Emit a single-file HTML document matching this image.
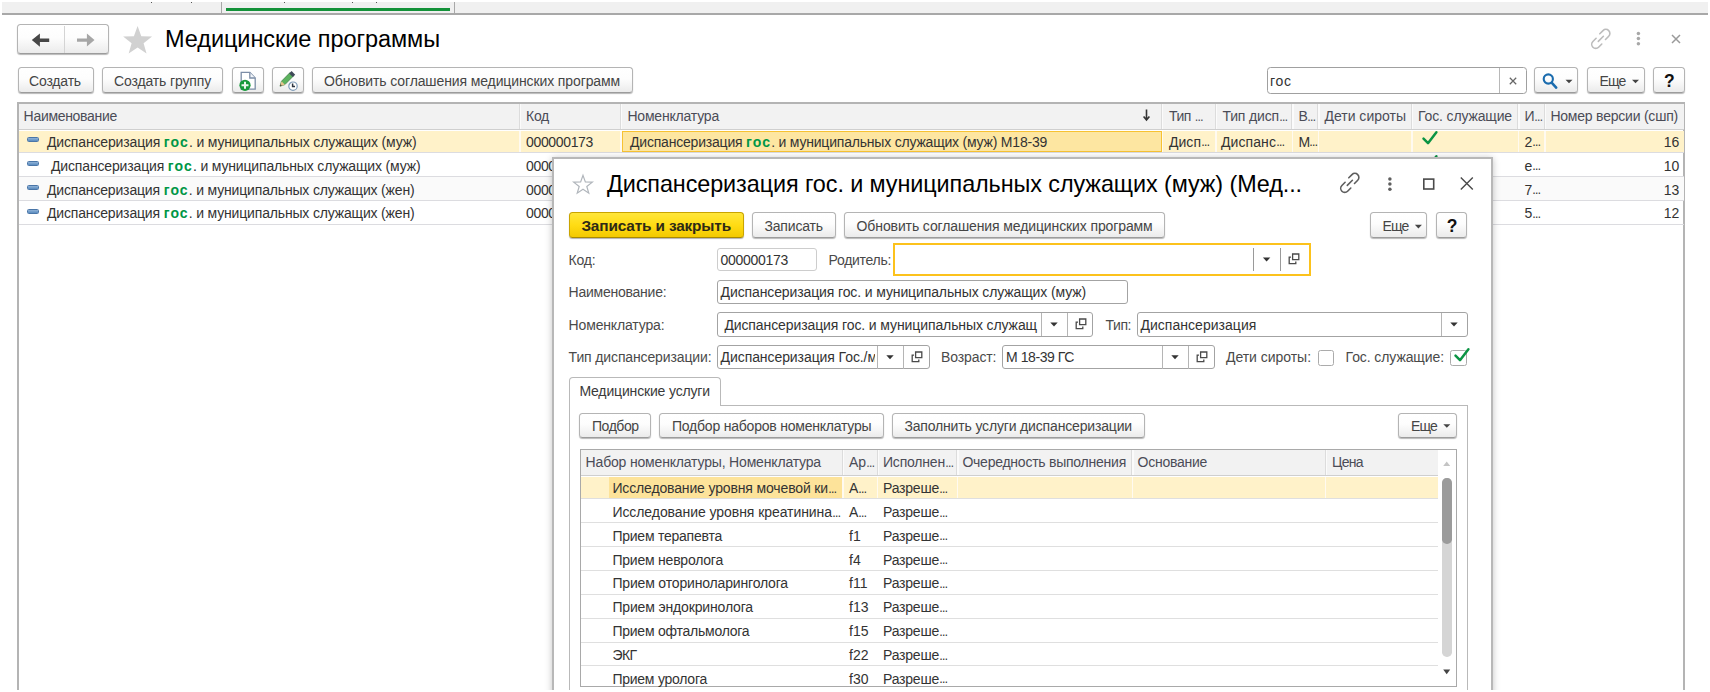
<!DOCTYPE html>
<html lang="ru"><head><meta charset="utf-8"><title>Медицинские программы</title><style>
html,body{margin:0;padding:0;}
body{width:1710px;height:692px;overflow:hidden;background:#fff;position:relative;font-family:"Liberation Sans", Arial, sans-serif;}
#r{position:absolute;left:0;top:0;width:1710px;height:692px;overflow:hidden;background:#fff;}
#r div{position:absolute;box-sizing:border-box;}
#r svg{position:absolute;overflow:visible;}
.t{position:absolute;white-space:pre;}
.btn{border:1px solid #b4b4b4;border-bottom-color:#9c9c9c;border-radius:3.5px;background:linear-gradient(#ffffff 0%,#fdfdfd 45%,#ebebeb 100%);box-shadow:0 1px 1px rgba(0,0,0,.28);}
.inp{border:1px solid #a6a6a6;border-radius:3px;background:#fff;}
b.g{color:#009646;font-weight:bold;letter-spacing:1.1px;}
</style></head><body><div id="r">
<div style="left:2px;top:2px;width:1706px;height:11.5px;background:#f0f0f0;"></div>
<div style="left:2px;top:13px;width:1706px;height:1.5px;background:#a8a8a8;"></div>
<div style="left:221px;top:2px;width:1.2px;height:11.5px;background:#a8a8a8;"></div>
<div style="left:453.5px;top:2px;width:1.2px;height:11.5px;background:#a8a8a8;"></div>
<div style="left:225.7px;top:8.2px;width:224px;height:2.4px;background:#14923a;"></div>
<div style="left:150.5px;top:2px;width:1.2px;height:1.2px;background:#555;"></div>
<div style="left:191px;top:2px;width:1.2px;height:1.2px;background:#555;"></div>
<div style="left:284px;top:2px;width:1.2px;height:1.2px;background:#555;"></div>
<div style="left:351.5px;top:2px;width:1.2px;height:1.2px;background:#555;"></div>
<div style="left:375.6px;top:2px;width:1.2px;height:1.2px;background:#555;"></div>
<div class="btn" style="left:17.4px;top:24.4px;width:92px;height:29.8px;"></div>
<div style="left:64px;top:26px;width:1px;height:27px;background:#d4d4d4;"></div>
<svg style="left:0;top:0" width="200" height="60"><path d="M31.8 40.1L39.9 33.4V38.4H49.2V41.9H39.9V46.7z" fill="#474747"/><path d="M94.5 40.1L86.9 33.6V38.5H77V41.8H86.9V46.6z" fill="#a6a6a6"/></svg>
<svg style="left:0;top:0" width="1710" height="692"><polygon points="137.60,26.10 141.30,36.20 152.06,36.60 143.59,43.25 146.53,53.60 137.60,47.60 128.67,53.60 131.61,43.25 123.14,36.60 133.90,36.20" fill="#d1d1d1" stroke="none" stroke-width="0" stroke-linejoin="miter"/></svg>
<span class="t" style="left:165.00px;top:28.11px;font-size:23.5px;line-height:23.5px;color:#000;letter-spacing:-0.064px;">Медицинские программы</span>
<svg style="left:1591px;top:29.4px" width="20" height="20" viewBox="0 0 20 20"><g fill="none" stroke="#bcbcbc" stroke-width="1.6" stroke-linecap="round"><path d="M8.8 4.8L12 1.6A4 4 0 0 1 17.7 7.3L14.5 10.5"/><path d="M10.8 15.0L7.6 18.2A4 4 0 0 1 1.9 12.5L5.1 9.3"/><path d="M7.3 12.4L12.4 7.3"/></g></svg>
<svg style="left:0;top:0" width="1710" height="692"><circle cx="1638.4" cy="33.5" r="1.75" fill="#a8a8a8"/><circle cx="1638.4" cy="38.6" r="1.75" fill="#a8a8a8"/><circle cx="1638.4" cy="43.7" r="1.75" fill="#a8a8a8"/></svg>
<svg style="left:1671px;top:34px" width="10" height="10" viewBox="0 0 10 10"><path d="M1 1l8 8M9 1l-8 8" stroke="#9a9a9a" stroke-width="1.5" fill="none"/></svg>
<div class="btn" style="left:17.6px;top:67.4px;width:76.4px;height:25.8px;"></div>
<span class="t" style="left:29.00px;top:74.15px;font-size:14px;line-height:14px;color:#454545;letter-spacing:-0.174px;">Создать</span>
<div class="btn" style="left:102px;top:67.4px;width:121.0px;height:25.8px;"></div>
<span class="t" style="left:114.00px;top:74.15px;font-size:14px;line-height:14px;color:#454545;letter-spacing:-0.143px;">Создать группу</span>
<div class="btn" style="left:232px;top:67.4px;width:32.0px;height:25.8px;"></div>
<div class="btn" style="left:272px;top:67.4px;width:32.0px;height:25.8px;"></div>
<div class="btn" style="left:312px;top:67.4px;width:321.0px;height:25.8px;"></div>
<span class="t" style="left:324.00px;top:74.15px;font-size:14px;line-height:14px;color:#454545;letter-spacing:-0.115px;">Обновить соглашения медицинских программ</span>
<svg style="left:238px;top:70px" width="20" height="22" viewBox="0 0 20 22"><path d="M3.2 2.4h8.6l5.4 5.6V19.2H3.2z" fill="#fff" stroke="#7b8da6" stroke-width="1.3"/><path d="M11.8 2.4v5.6h5.4" fill="#f3f6fa" stroke="#7b8da6" stroke-width="1.3"/><circle cx="7" cy="15.3" r="5.6" fill="#16993a"/><path d="M7 11.8v7M3.5 15.3h7" stroke="#e9f7ec" stroke-width="2"/></svg>
<svg style="left:277px;top:70px" width="22" height="22" viewBox="0 0 22 22"><path d="M3 16.2l1.5-5L13 2.6l3.4 3.4-8.5 8.6z" fill="#5cb35e" stroke="#3f7f45" stroke-width=".8"/><path d="M12.2 3.4l2.4-2.3 3.6 3.6-2.4 2.3z" fill="#3f4a59"/><path d="M3 16.2l1.5-5 3.4 3.5z" fill="#e8c48f"/><path d="M3 16.2l.6-2 1.3 1.4z" fill="#333"/><circle cx="16" cy="16.2" r="4.2" fill="#fff" stroke="#7f9bb8" stroke-width="1.2"/><path d="M15.6 13.6v3h2.4" fill="none" stroke="#2c3440" stroke-width="1.5"/></svg>
<div class="inp" style="left:1267px;top:67.4px;width:259.6px;height:26.4px;border-color:#a0a0a0;border-radius:3.5px;"></div>
<div style="left:1499.3px;top:68px;width:1px;height:25px;background:#b8b8b8;"></div>
<span class="t" style="left:1270.00px;top:73.75px;font-size:14px;line-height:14px;color:#333333;letter-spacing:0.669px;">гос</span>
<svg style="left:1508.6px;top:76.8px" width="8" height="8" viewBox="0 0 8 8"><path d="M.8.8l6.4 6.4M7.2.8L.8 7.2" stroke="#666" stroke-width="1.25" fill="none"/></svg>
<div class="btn" style="left:1534.4px;top:67.4px;width:44.0px;height:25.8px;"></div>
<svg style="left:1541px;top:72px" width="18" height="18" viewBox="0 0 18 18"><circle cx="7.3" cy="7" r="4.6" fill="none" stroke="#1b6cae" stroke-width="2.1"/><path d="M10.6 10.6l4.6 5" stroke="#1b6cae" stroke-width="2.6" stroke-linecap="round"/></svg>
<svg style="left:0;top:0" width="1710" height="692"><polygon points="1565.5,79.7 1572.5,79.7 1569.0,83.3" fill="#444"/></svg>
<div class="btn" style="left:1587px;top:67.4px;width:58.0px;height:25.8px;"></div>
<span class="t" style="left:1599.50px;top:74.15px;font-size:14px;line-height:14px;color:#454545;letter-spacing:-0.833px;">Еще</span>
<svg style="left:0;top:0" width="1710" height="692"><polygon points="1632.0,79.7 1639.0,79.7 1635.5,83.3" fill="#444"/></svg>
<div class="btn" style="left:1653px;top:67.4px;width:31.6px;height:25.8px;"></div>
<span class="t" style="left:1664.00px;top:73.19px;font-size:17.5px;line-height:17.5px;color:#111;font-weight:bold;">?</span>
<div style="left:17.2px;top:102.2px;width:1668.0px;height:600px;border:2px solid #b4b4b4;background:#fff;"></div>
<div style="left:19px;top:103.5px;width:1665.2px;height:26px;background:#f2f2f2;"></div>
<div style="left:19px;top:129.3px;width:1665.2px;height:1.2px;background:#cfcfcf;"></div>
<div style="left:519px;top:103.5px;width:1px;height:25.6px;background:#dcdcdc;"></div>
<div style="left:520px;top:103.5px;width:1.2px;height:25.6px;background:#fbfbfb;"></div>
<div style="left:620px;top:103.5px;width:1px;height:25.6px;background:#dcdcdc;"></div>
<div style="left:621px;top:103.5px;width:1.2px;height:25.6px;background:#fbfbfb;"></div>
<div style="left:1161px;top:103.5px;width:1px;height:25.6px;background:#dcdcdc;"></div>
<div style="left:1162px;top:103.5px;width:1.2px;height:25.6px;background:#fbfbfb;"></div>
<div style="left:1215px;top:103.5px;width:1px;height:25.6px;background:#dcdcdc;"></div>
<div style="left:1216px;top:103.5px;width:1.2px;height:25.6px;background:#fbfbfb;"></div>
<div style="left:1291.4px;top:103.5px;width:1px;height:25.6px;background:#dcdcdc;"></div>
<div style="left:1292.4px;top:103.5px;width:1.2px;height:25.6px;background:#fbfbfb;"></div>
<div style="left:1317.4px;top:103.5px;width:1px;height:25.6px;background:#dcdcdc;"></div>
<div style="left:1318.4px;top:103.5px;width:1.2px;height:25.6px;background:#fbfbfb;"></div>
<div style="left:1411px;top:103.5px;width:1px;height:25.6px;background:#dcdcdc;"></div>
<div style="left:1412px;top:103.5px;width:1.2px;height:25.6px;background:#fbfbfb;"></div>
<div style="left:1517.4px;top:103.5px;width:1px;height:25.6px;background:#dcdcdc;"></div>
<div style="left:1518.4px;top:103.5px;width:1.2px;height:25.6px;background:#fbfbfb;"></div>
<div style="left:1544px;top:103.5px;width:1px;height:25.6px;background:#dcdcdc;"></div>
<div style="left:1545px;top:103.5px;width:1.2px;height:25.6px;background:#fbfbfb;"></div>
<div style="left:19px;top:130.6px;width:1665.2px;height:21.6px;background:#fff2c9;"></div>
<div style="left:519.4px;top:130.6px;width:1.4px;height:21.6px;background:#fffaf0;"></div>
<div style="left:620.4px;top:130.6px;width:1.4px;height:21.6px;background:#fffaf0;"></div>
<div style="left:1161.4px;top:130.6px;width:1.4px;height:21.6px;background:#fffaf0;"></div>
<div style="left:1215.4px;top:130.6px;width:1.4px;height:21.6px;background:#fffaf0;"></div>
<div style="left:1291.8000000000002px;top:130.6px;width:1.4px;height:21.6px;background:#fffaf0;"></div>
<div style="left:1317.8000000000002px;top:130.6px;width:1.4px;height:21.6px;background:#fffaf0;"></div>
<div style="left:1411.4px;top:130.6px;width:1.4px;height:21.6px;background:#fffaf0;"></div>
<div style="left:1517.8000000000002px;top:130.6px;width:1.4px;height:21.6px;background:#fffaf0;"></div>
<div style="left:1544.4px;top:130.6px;width:1.4px;height:21.6px;background:#fffaf0;"></div>
<div style="left:19px;top:177.2px;width:1665.2px;height:23px;background:#fafafa;"></div>
<div style="left:19px;top:152px;width:1665.2px;height:1px;background:#dcdce0;"></div>
<div style="left:19px;top:176px;width:1665.2px;height:1px;background:#dcdce0;"></div>
<div style="left:19px;top:200px;width:1665.2px;height:1px;background:#dcdce0;"></div>
<div style="left:19px;top:224px;width:1665.2px;height:1px;background:#dcdce0;"></div>
<div style="left:621.6px;top:131px;width:540px;height:21.4px;background:#fde6a1;border:1.6px solid #f7c232;"></div>
<span class="t" style="left:23.60px;top:108.95px;font-size:14px;line-height:14px;color:#4b4c57;letter-spacing:-0.305px;">Наименование</span>
<span class="t" style="left:526.00px;top:108.95px;font-size:14px;line-height:14px;color:#4b4c57;letter-spacing:-0.271px;">Код</span>
<span class="t" style="left:627.40px;top:108.95px;font-size:14px;line-height:14px;color:#4b4c57;letter-spacing:-0.196px;">Номенклатура</span>
<svg style="left:1142px;top:107px" width="9" height="14" viewBox="0 0 9 14"><path d="M4.5 2.6v10M1.6 9.6l2.9 3.4 2.9-3.4" fill="none" stroke="#333" stroke-width="1.6"/></svg>
<span class="t" style="left:1169.00px;top:108.95px;font-size:14px;line-height:14px;color:#4b4c57;letter-spacing:-0.448px;">Тип</span>
<span class="t" style="left:1195.00px;top:113.69px;font-size:8.4px;line-height:8.4px;color:#4b4c57;font-weight:bold;">…</span>
<span class="t" style="left:1222.40px;top:108.95px;font-size:14px;line-height:14px;color:#4b4c57;letter-spacing:-0.152px;">Тип дисп</span>
<span class="t" style="left:1279.50px;top:113.69px;font-size:8.4px;line-height:8.4px;color:#4b4c57;font-weight:bold;">…</span>
<span class="t" style="left:1298.40px;top:108.95px;font-size:14px;line-height:14px;color:#4b4c57;letter-spacing:-0.744px;">В</span>
<span class="t" style="left:1307.50px;top:113.69px;font-size:8.4px;line-height:8.4px;color:#4b4c57;font-weight:bold;">…</span>
<span class="t" style="left:1324.40px;top:108.95px;font-size:14px;line-height:14px;color:#4b4c57;letter-spacing:0.011px;">Дети сироты</span>
<span class="t" style="left:1418.00px;top:108.95px;font-size:14px;line-height:14px;color:#4b4c57;letter-spacing:-0.139px;">Гос. служащие</span>
<span class="t" style="left:1524.40px;top:108.95px;font-size:14px;line-height:14px;color:#4b4c57;letter-spacing:-0.463px;">И</span>
<span class="t" style="left:1534.50px;top:113.69px;font-size:8.4px;line-height:8.4px;color:#4b4c57;font-weight:bold;">…</span>
<span class="t" style="left:1550.40px;top:108.95px;font-size:14px;line-height:14px;color:#4b4c57;letter-spacing:-0.218px;">Номер версии (сшп)</span>
<span class="t" style="left:47.00px;top:134.75px;font-size:14px;line-height:14px;color:#333333;letter-spacing:-0.156px;">Диспансеризация <b class="g">гос</b>. и муниципальных служащих (муж)</span>
<span class="t" style="left:526.00px;top:134.75px;font-size:14px;line-height:14px;color:#333333;letter-spacing:-0.342px;">000000173</span>
<span class="t" style="left:1663.82px;top:134.75px;font-size:14px;line-height:14px;color:#333333;">16</span>
<span class="t" style="left:1524.40px;top:134.75px;font-size:14px;line-height:14px;color:#333333;">2</span>
<span class="t" style="left:1532.50px;top:139.49px;font-size:8.4px;line-height:8.4px;color:#333333;font-weight:bold;">…</span>
<div style="left:27px;top:137px;width:12.4px;height:5.2px;background:linear-gradient(#8fb2d6,#5b8cc0);border:1px solid #4a76a8;border-radius:1.5px;"></div>
<span class="t" style="left:51.00px;top:158.75px;font-size:14px;line-height:14px;color:#333333;letter-spacing:-0.156px;">Диспансеризация <b class="g">гос</b>. и муниципальных служащих (муж)</span>
<span class="t" style="left:526.00px;top:158.75px;font-size:14px;line-height:14px;color:#333333;letter-spacing:-0.342px;">000000180</span>
<span class="t" style="left:1663.82px;top:158.75px;font-size:14px;line-height:14px;color:#333333;">10</span>
<span class="t" style="left:1524.40px;top:158.75px;font-size:14px;line-height:14px;color:#333333;">е</span>
<span class="t" style="left:1532.50px;top:163.49px;font-size:8.4px;line-height:8.4px;color:#333333;font-weight:bold;">…</span>
<div style="left:27px;top:160.6px;width:12.4px;height:5.2px;background:linear-gradient(#8fb2d6,#5b8cc0);border:1px solid #4a76a8;border-radius:1.5px;"></div>
<span class="t" style="left:47.00px;top:182.55px;font-size:14px;line-height:14px;color:#333333;letter-spacing:-0.167px;">Диспансеризация <b class="g">гос</b>. и муниципальных служащих (жен)</span>
<span class="t" style="left:526.00px;top:182.55px;font-size:14px;line-height:14px;color:#333333;letter-spacing:-0.342px;">000000174</span>
<span class="t" style="left:1663.82px;top:182.55px;font-size:14px;line-height:14px;color:#333333;">13</span>
<span class="t" style="left:1524.40px;top:182.55px;font-size:14px;line-height:14px;color:#333333;">7</span>
<span class="t" style="left:1532.50px;top:187.29px;font-size:8.4px;line-height:8.4px;color:#333333;font-weight:bold;">…</span>
<div style="left:27px;top:184.6px;width:12.4px;height:5.2px;background:linear-gradient(#8fb2d6,#5b8cc0);border:1px solid #4a76a8;border-radius:1.5px;"></div>
<span class="t" style="left:47.00px;top:206.35px;font-size:14px;line-height:14px;color:#333333;letter-spacing:-0.167px;">Диспансеризация <b class="g">гос</b>. и муниципальных служащих (жен)</span>
<span class="t" style="left:526.00px;top:206.35px;font-size:14px;line-height:14px;color:#333333;letter-spacing:-0.342px;">000000181</span>
<span class="t" style="left:1663.82px;top:206.35px;font-size:14px;line-height:14px;color:#333333;">12</span>
<span class="t" style="left:1524.40px;top:206.35px;font-size:14px;line-height:14px;color:#333333;">5</span>
<span class="t" style="left:1532.50px;top:211.09px;font-size:8.4px;line-height:8.4px;color:#333333;font-weight:bold;">…</span>
<div style="left:27px;top:208.6px;width:12.4px;height:5.2px;background:linear-gradient(#8fb2d6,#5b8cc0);border:1px solid #4a76a8;border-radius:1.5px;"></div>
<span class="t" style="left:630.00px;top:134.75px;font-size:14px;line-height:14px;color:#333333;letter-spacing:-0.203px;">Диспансеризация <b class="g">гос</b>. и муниципальных служащих (муж) М18-39</span>
<span class="t" style="left:1169.00px;top:134.75px;font-size:14px;line-height:14px;color:#333333;letter-spacing:0.027px;">Дисп</span>
<span class="t" style="left:1201.50px;top:139.49px;font-size:8.4px;line-height:8.4px;color:#333333;font-weight:bold;">…</span>
<span class="t" style="left:1221.00px;top:134.75px;font-size:14px;line-height:14px;color:#333333;letter-spacing:0.085px;">Диспанс</span>
<span class="t" style="left:1276.50px;top:139.49px;font-size:8.4px;line-height:8.4px;color:#333333;font-weight:bold;">…</span>
<span class="t" style="left:1298.40px;top:134.75px;font-size:14px;line-height:14px;color:#333333;letter-spacing:-1.072px;">М</span>
<span class="t" style="left:1309.50px;top:139.49px;font-size:8.4px;line-height:8.4px;color:#333333;font-weight:bold;">…</span>
<svg style="left:1421.6px;top:130.8px" width="16.0" height="14.0" viewBox="0 0 16 14"><path d="M1.5 7.7L6 12.2L14.4 1.2" fill="none" stroke="#0b9444" stroke-width="2.5" stroke-linecap="round" stroke-linejoin="round"/></svg>
<svg style="left:1421.6px;top:154.6px" width="16.0" height="14.0" viewBox="0 0 16 14"><path d="M1.5 7.7L6 12.2L14.4 1.2" fill="none" stroke="#0b9444" stroke-width="2.5" stroke-linecap="round" stroke-linejoin="round"/></svg>
<div style="left:552.4px;top:157.4px;width:940.8000000000001px;height:560px;background:#fff;border:2px solid #b8b8b8;box-shadow:0 1px 7px rgba(0,0,0,.24);"></div>
<svg style="left:0;top:0" width="1710" height="692"><polygon points="583.00,175.40 585.35,181.96 592.32,182.17 586.80,186.44 588.76,193.13 583.00,189.20 577.24,193.13 579.20,186.44 573.68,182.17 580.65,181.96" fill="#fff" stroke="#b0b5bb" stroke-width="1.2" stroke-linejoin="miter"/></svg>
<span class="t" style="left:607.00px;top:172.59px;font-size:23.4px;line-height:23.4px;color:#000;letter-spacing:-0.088px;">Диспансеризация гос. и муниципальных служащих (муж) (Мед...</span>
<svg style="left:1340px;top:173px" width="20" height="20" viewBox="0 0 20 20"><g fill="none" stroke="#5e5e5e" stroke-width="1.6" stroke-linecap="round"><path d="M8.8 4.8L12 1.6A4 4 0 0 1 17.7 7.3L14.5 10.5"/><path d="M10.8 15.0L7.6 18.2A4 4 0 0 1 1.9 12.5L5.1 9.3"/><path d="M7.3 12.4L12.4 7.3"/></g></svg>
<svg style="left:0;top:0" width="1710" height="692"><circle cx="1389.9" cy="179.0" r="1.75" fill="#5e5e5e"/><circle cx="1389.9" cy="184.1" r="1.75" fill="#5e5e5e"/><circle cx="1389.9" cy="189.2" r="1.75" fill="#5e5e5e"/></svg>
<svg style="left:0;top:0" width="1710" height="692"><rect x="1423.8" y="179.1" width="9.9" height="9.9" fill="none" stroke="#4a4a4a" stroke-width="1.6"/></svg>
<svg style="left:1460px;top:177px" width="14" height="14" viewBox="0 0 14 14"><path d="M.8.6l12 12M12.8.6L.8 12.6" stroke="#4a4a4a" stroke-width="1.4" fill="none"/></svg>
<div style="left:568.6px;top:212.4px;width:175.4px;height:25.8px;border:1px solid #c9a400;border-bottom-color:#a98a00;border-radius:3.5px;background:linear-gradient(#ffe63a 0%,#ffdc14 50%,#f3c900 100%);box-shadow:0 1px 1px rgba(0,0,0,.3);"></div>
<span class="t" style="left:581.40px;top:218.16px;font-size:15.4px;line-height:15.4px;color:#2e2a16;letter-spacing:-0.163px;font-weight:bold;">Записать и закрыть</span>
<div class="btn" style="left:752px;top:212.4px;width:84.4px;height:25.8px;"></div>
<span class="t" style="left:764.40px;top:219.15px;font-size:14px;line-height:14px;color:#454545;letter-spacing:-0.154px;">Записать</span>
<div class="btn" style="left:844.4px;top:212.4px;width:320.6px;height:25.8px;"></div>
<span class="t" style="left:856.60px;top:219.15px;font-size:14px;line-height:14px;color:#454545;letter-spacing:-0.115px;">Обновить соглашения медицинских программ</span>
<div class="btn" style="left:1370px;top:212.4px;width:57.4px;height:25.8px;"></div>
<span class="t" style="left:1382.40px;top:219.15px;font-size:14px;line-height:14px;color:#454545;letter-spacing:-0.833px;">Еще</span>
<svg style="left:0;top:0" width="1710" height="692"><polygon points="1414.9,224.8 1421.9,224.8 1418.4,228.4" fill="#444"/></svg>
<div class="btn" style="left:1436px;top:212.4px;width:31.4px;height:25.8px;"></div>
<span class="t" style="left:1446.80px;top:218.19px;font-size:17.5px;line-height:17.5px;color:#111;font-weight:bold;">?</span>
<span class="t" style="left:568.60px;top:252.55px;font-size:14px;line-height:14px;color:#4a4a4a;letter-spacing:-0.226px;">Код:</span>
<div class="inp" style="left:717.4px;top:247.6px;width:100.0px;height:23.8px;border-color:#cdcdcd;"></div>
<span class="t" style="left:720.60px;top:252.55px;font-size:14px;line-height:14px;color:#333333;letter-spacing:-0.298px;">000000173</span>
<span class="t" style="left:828.60px;top:252.55px;font-size:14px;line-height:14px;color:#4a4a4a;letter-spacing:-0.303px;">Родитель:</span>
<div style="left:893px;top:243.4px;width:417.6px;height:32.4px;border:2.2px solid #fcc21c;background:#fff;"></div>
<div style="left:1253.3px;top:248.4px;width:1px;height:22.400000000000006px;background:#9a9a9a;"></div>
<div style="left:1279.7px;top:248.4px;width:1px;height:22.400000000000006px;background:#9a9a9a;"></div>
<svg style="left:0;top:0" width="1710" height="692"><polygon points="1262.9,257.4 1270.3,257.4 1266.6,261.4" fill="#333"/></svg>
<svg style="left:1287.6px;top:253.2px" width="12" height="12" viewBox="0 0 12 12"><path d="M4.6 1h6.2v5.6H4.6z" fill="none" stroke="#4a4a4a" stroke-width="1.3"/><path d="M3 4.2H1.2v6.4h6.6V8.4" fill="none" stroke="#4a4a4a" stroke-width="1.3"/></svg>
<span class="t" style="left:568.60px;top:285.15px;font-size:14px;line-height:14px;color:#4a4a4a;letter-spacing:-0.243px;">Наименование:</span>
<div class="inp" style="left:717.4px;top:280px;width:410.2px;height:24.2px;border-color:#a3a3a3;"></div>
<span class="t" style="left:720.60px;top:285.15px;font-size:14px;line-height:14px;color:#333333;letter-spacing:-0.118px;">Диспансеризация гос. и муниципальных служащих (муж)</span>
<span class="t" style="left:568.60px;top:317.55px;font-size:14px;line-height:14px;color:#4a4a4a;letter-spacing:-0.157px;">Номенклатура:</span>
<div class="inp" style="left:717.4px;top:312.4px;width:376.0px;height:24.6px;border-color:#a3a3a3;"></div>
<div style="left:1041.1px;top:313px;width:1px;height:23.399999999999977px;background:#b5b5b5;"></div>
<div style="left:1067.1px;top:313px;width:1px;height:23.399999999999977px;background:#b5b5b5;"></div>
<span class="t" style="left:720.60px;top:317.55px;font-size:14px;line-height:14px;color:#333333;letter-spacing:-0.104px;"> Диспансеризация гос. и муниципальных служащ</span>
<svg style="left:0;top:0" width="1710" height="692"><polygon points="1050.3,322.6 1057.7,322.6 1054.0,326.6" fill="#333"/></svg>
<svg style="left:1074.6px;top:318.4px" width="12" height="12" viewBox="0 0 12 12"><path d="M4.6 1h6.2v5.6H4.6z" fill="none" stroke="#4a4a4a" stroke-width="1.3"/><path d="M3 4.2H1.2v6.4h6.6V8.4" fill="none" stroke="#4a4a4a" stroke-width="1.3"/></svg>
<span class="t" style="left:1105.60px;top:317.55px;font-size:14px;line-height:14px;color:#4a4a4a;letter-spacing:-0.459px;">Тип:</span>
<div class="inp" style="left:1137px;top:312.4px;width:330.6px;height:24.6px;border-color:#a3a3a3;"></div>
<div style="left:1441.1px;top:313px;width:1px;height:23.399999999999977px;background:#b5b5b5;"></div>
<span class="t" style="left:1140.40px;top:317.55px;font-size:14px;line-height:14px;color:#333333;letter-spacing:0.039px;">Диспансеризация</span>
<svg style="left:0;top:0" width="1710" height="692"><polygon points="1450.3,322.6 1457.7,322.6 1454.0,326.6" fill="#333"/></svg>
<span class="t" style="left:568.60px;top:350.15px;font-size:14px;line-height:14px;color:#4a4a4a;letter-spacing:-0.133px;">Тип диспансеризации:</span>
<div class="inp" style="left:717.4px;top:345px;width:212.6px;height:24.4px;border-color:#a3a3a3;"></div>
<div style="left:877.1px;top:345.6px;width:1px;height:23.19999999999999px;background:#b5b5b5;"></div>
<div style="left:903.1px;top:345.6px;width:1px;height:23.19999999999999px;background:#b5b5b5;"></div>
<div style="left:719px;top:347px;width:156.4px;height:21px;overflow:hidden;"><span class="t" style="left:1.6px;top:3.15px;font-size:14px;line-height:14px;color:#333;letter-spacing:-0.08px;">Диспансеризация Гос./муниципальных</span></div>
<svg style="left:0;top:0" width="1710" height="692"><polygon points="886.3,355.2 893.7,355.2 890.0,359.2" fill="#333"/></svg>
<svg style="left:910.6px;top:351.0px" width="12" height="12" viewBox="0 0 12 12"><path d="M4.6 1h6.2v5.6H4.6z" fill="none" stroke="#4a4a4a" stroke-width="1.3"/><path d="M3 4.2H1.2v6.4h6.6V8.4" fill="none" stroke="#4a4a4a" stroke-width="1.3"/></svg>
<span class="t" style="left:941.00px;top:350.15px;font-size:14px;line-height:14px;color:#4a4a4a;letter-spacing:-0.108px;">Возраст:</span>
<div class="inp" style="left:1002.4px;top:345px;width:212.6px;height:24.4px;border-color:#a3a3a3;"></div>
<div style="left:1161.9px;top:345.6px;width:1px;height:23.19999999999999px;background:#b5b5b5;"></div>
<div style="left:1188.1px;top:345.6px;width:1px;height:23.19999999999999px;background:#b5b5b5;"></div>
<span class="t" style="left:1006.00px;top:350.15px;font-size:14px;line-height:14px;color:#333333;letter-spacing:-0.431px;">М 18-39 ГС</span>
<svg style="left:0;top:0" width="1710" height="692"><polygon points="1171.3,355.2 1178.7,355.2 1175.0,359.2" fill="#333"/></svg>
<svg style="left:1195.6px;top:351.0px" width="12" height="12" viewBox="0 0 12 12"><path d="M4.6 1h6.2v5.6H4.6z" fill="none" stroke="#4a4a4a" stroke-width="1.3"/><path d="M3 4.2H1.2v6.4h6.6V8.4" fill="none" stroke="#4a4a4a" stroke-width="1.3"/></svg>
<span class="t" style="left:1226.00px;top:350.15px;font-size:14px;line-height:14px;color:#4a4a4a;letter-spacing:-0.031px;">Дети сироты:</span>
<div style="left:1318px;top:349.6px;width:16.2px;height:16.2px;border:1px solid #ababab;border-radius:2.5px;background:#fff;"></div>
<span class="t" style="left:1345.60px;top:350.15px;font-size:14px;line-height:14px;color:#4a4a4a;letter-spacing:-0.093px;">Гос. служащие:</span>
<div style="left:1450.4px;top:349.6px;width:16.6px;height:16.2px;border:1px solid #ababab;border-radius:2.5px;background:#fff;"></div>
<svg style="left:1453.6px;top:348.4px" width="16.0" height="14.0" viewBox="0 0 16 14"><path d="M1.5 7.7L6 12.2L14.4 1.2" fill="none" stroke="#0b9444" stroke-width="2.5" stroke-linecap="round" stroke-linejoin="round"/></svg>
<div style="left:568.6px;top:404.6px;width:899.1999999999999px;height:320px;border:1.2px solid #b9b9b9;background:#fff;"></div>
<div style="left:568.6px;top:377.4px;width:152.8px;height:28.6px;border:1.2px solid #b9b9b9;border-bottom:none;border-radius:4px 4px 0 0;background:#fff;"></div>
<span class="t" style="left:579.40px;top:383.75px;font-size:14px;line-height:14px;color:#3a3a3a;letter-spacing:-0.157px;">Медицинские услуги</span>
<div class="btn" style="left:579.4px;top:412.6px;width:72.0px;height:25.8px;"></div>
<span class="t" style="left:592.00px;top:418.55px;font-size:14px;line-height:14px;color:#454545;letter-spacing:-0.452px;">Подбор</span>
<div class="btn" style="left:659.4px;top:412.6px;width:224.6px;height:25.8px;"></div>
<span class="t" style="left:672.00px;top:418.55px;font-size:14px;line-height:14px;color:#454545;letter-spacing:-0.217px;">Подбор наборов номенклатуры</span>
<div class="btn" style="left:892px;top:412.6px;width:253.4px;height:25.8px;"></div>
<span class="t" style="left:904.40px;top:418.55px;font-size:14px;line-height:14px;color:#454545;letter-spacing:-0.162px;">Заполнить услуги диспансеризации</span>
<div class="btn" style="left:1398.4px;top:412.6px;width:58.2px;height:25.8px;"></div>
<span class="t" style="left:1411.00px;top:418.55px;font-size:14px;line-height:14px;color:#454545;letter-spacing:-0.833px;">Еще</span>
<svg style="left:0;top:0" width="1710" height="692"><polygon points="1443.3,424.2 1450.3,424.2 1446.8,427.8" fill="#444"/></svg>
<div style="left:579.6px;top:448.6px;width:877.4px;height:238.39999999999998px;border:1.4px solid #a9a9a9;background:#fff;"></div>
<div style="left:581px;top:450px;width:856.5999999999999px;height:25px;background:#f2f2f2;"></div>
<div style="left:581px;top:475px;width:856.5999999999999px;height:1.2px;background:#cfcfcf;"></div>
<div style="left:842px;top:450px;width:1px;height:25px;background:#dcdcdc;"></div>
<div style="left:843px;top:450px;width:1.2px;height:25px;background:#fbfbfb;"></div>
<div style="left:876.6px;top:450px;width:1px;height:25px;background:#dcdcdc;"></div>
<div style="left:877.6px;top:450px;width:1.2px;height:25px;background:#fbfbfb;"></div>
<div style="left:956.4px;top:450px;width:1px;height:25px;background:#dcdcdc;"></div>
<div style="left:957.4px;top:450px;width:1.2px;height:25px;background:#fbfbfb;"></div>
<div style="left:1131.4px;top:450px;width:1px;height:25px;background:#dcdcdc;"></div>
<div style="left:1132.4px;top:450px;width:1.2px;height:25px;background:#fbfbfb;"></div>
<div style="left:1324.6px;top:450px;width:1px;height:25px;background:#dcdcdc;"></div>
<div style="left:1325.6px;top:450px;width:1.2px;height:25px;background:#fbfbfb;"></div>
<div style="left:581px;top:477.4px;width:856.5999999999999px;height:20.4px;background:#fff2c9;"></div>
<div style="left:842.4px;top:477.4px;width:1.4px;height:20.4px;background:#fffaf0;"></div>
<div style="left:877.0px;top:477.4px;width:1.4px;height:20.4px;background:#fffaf0;"></div>
<div style="left:956.8px;top:477.4px;width:1.4px;height:20.4px;background:#fffaf0;"></div>
<div style="left:1131.8000000000002px;top:477.4px;width:1.4px;height:20.4px;background:#fffaf0;"></div>
<div style="left:1325.0px;top:477.4px;width:1.4px;height:20.4px;background:#fffaf0;"></div>
<div style="left:609.4px;top:477.4px;width:233px;height:20.4px;background:#fde39a;"></div>
<div style="left:581px;top:498px;width:856.5999999999999px;height:1px;background:#dfdfdf;"></div>
<div style="left:581px;top:522px;width:856.5999999999999px;height:1px;background:#dfdfdf;"></div>
<div style="left:581px;top:546px;width:856.5999999999999px;height:1px;background:#dfdfdf;"></div>
<div style="left:581px;top:570px;width:856.5999999999999px;height:1px;background:#dfdfdf;"></div>
<div style="left:581px;top:594px;width:856.5999999999999px;height:1px;background:#dfdfdf;"></div>
<div style="left:581px;top:618px;width:856.5999999999999px;height:1px;background:#dfdfdf;"></div>
<div style="left:581px;top:642px;width:856.5999999999999px;height:1px;background:#dfdfdf;"></div>
<div style="left:581px;top:665px;width:856.5999999999999px;height:1px;background:#dfdfdf;"></div>
<span class="t" style="left:585.60px;top:455.15px;font-size:14px;line-height:14px;color:#4b4c57;letter-spacing:-0.174px;">Набор номенклатуры, Номенклатура</span>
<span class="t" style="left:849.00px;top:455.15px;font-size:14px;line-height:14px;color:#4b4c57;letter-spacing:-0.062px;">Ар</span>
<span class="t" style="left:866.50px;top:459.89px;font-size:8.4px;line-height:8.4px;color:#4b4c57;font-weight:bold;">…</span>
<span class="t" style="left:883.00px;top:455.15px;font-size:14px;line-height:14px;color:#4b4c57;letter-spacing:-0.193px;">Исполнен</span>
<span class="t" style="left:945.50px;top:459.89px;font-size:8.4px;line-height:8.4px;color:#4b4c57;font-weight:bold;">…</span>
<span class="t" style="left:962.40px;top:455.15px;font-size:14px;line-height:14px;color:#4b4c57;letter-spacing:-0.241px;">Очередность выполнения</span>
<span class="t" style="left:1137.60px;top:455.15px;font-size:14px;line-height:14px;color:#4b4c57;letter-spacing:-0.268px;">Основание</span>
<span class="t" style="left:1332.00px;top:455.15px;font-size:14px;line-height:14px;color:#4b4c57;letter-spacing:-0.668px;">Цена</span>
<span class="t" style="left:612.40px;top:480.95px;font-size:14px;line-height:14px;color:#333333;letter-spacing:-0.144px;">Исследование уровня мочевой ки</span>
<span class="t" style="left:828.50px;top:485.69px;font-size:8.4px;line-height:8.4px;color:#333333;font-weight:bold;">…</span>
<span class="t" style="left:849.00px;top:480.95px;font-size:14px;line-height:14px;color:#333333;">А</span>
<span class="t" style="left:858.50px;top:485.69px;font-size:8.4px;line-height:8.4px;color:#333333;font-weight:bold;">…</span>
<span class="t" style="left:883.00px;top:480.95px;font-size:14px;line-height:14px;color:#333333;letter-spacing:-0.217px;">Разреше</span>
<span class="t" style="left:939.50px;top:485.69px;font-size:8.4px;line-height:8.4px;color:#333333;font-weight:bold;">…</span>
<span class="t" style="left:612.40px;top:504.80px;font-size:14px;line-height:14px;color:#333333;letter-spacing:-0.063px;">Исследование уровня креатинина</span>
<span class="t" style="left:832.50px;top:509.54px;font-size:8.4px;line-height:8.4px;color:#333333;font-weight:bold;">…</span>
<span class="t" style="left:849.00px;top:504.80px;font-size:14px;line-height:14px;color:#333333;">А</span>
<span class="t" style="left:858.50px;top:509.54px;font-size:8.4px;line-height:8.4px;color:#333333;font-weight:bold;">…</span>
<span class="t" style="left:883.00px;top:504.80px;font-size:14px;line-height:14px;color:#333333;letter-spacing:-0.217px;">Разреше</span>
<span class="t" style="left:939.50px;top:509.54px;font-size:8.4px;line-height:8.4px;color:#333333;font-weight:bold;">…</span>
<span class="t" style="left:612.40px;top:528.65px;font-size:14px;line-height:14px;color:#333333;letter-spacing:-0.235px;">Прием терапевта</span>
<span class="t" style="left:849.00px;top:528.65px;font-size:14px;line-height:14px;color:#333333;">f1</span>
<span class="t" style="left:883.00px;top:528.65px;font-size:14px;line-height:14px;color:#333333;letter-spacing:-0.217px;">Разреше</span>
<span class="t" style="left:939.50px;top:533.39px;font-size:8.4px;line-height:8.4px;color:#333333;font-weight:bold;">…</span>
<span class="t" style="left:612.40px;top:552.50px;font-size:14px;line-height:14px;color:#333333;letter-spacing:-0.219px;">Прием невролога</span>
<span class="t" style="left:849.00px;top:552.50px;font-size:14px;line-height:14px;color:#333333;">f4</span>
<span class="t" style="left:883.00px;top:552.50px;font-size:14px;line-height:14px;color:#333333;letter-spacing:-0.217px;">Разреше</span>
<span class="t" style="left:939.50px;top:557.24px;font-size:8.4px;line-height:8.4px;color:#333333;font-weight:bold;">…</span>
<span class="t" style="left:612.40px;top:576.35px;font-size:14px;line-height:14px;color:#333333;letter-spacing:-0.166px;">Прием оториноларинголога</span>
<span class="t" style="left:849.00px;top:576.35px;font-size:14px;line-height:14px;color:#333333;">f11</span>
<span class="t" style="left:883.00px;top:576.35px;font-size:14px;line-height:14px;color:#333333;letter-spacing:-0.217px;">Разреше</span>
<span class="t" style="left:939.50px;top:581.09px;font-size:8.4px;line-height:8.4px;color:#333333;font-weight:bold;">…</span>
<span class="t" style="left:612.40px;top:600.20px;font-size:14px;line-height:14px;color:#333333;letter-spacing:-0.150px;">Прием эндокринолога</span>
<span class="t" style="left:849.00px;top:600.20px;font-size:14px;line-height:14px;color:#333333;">f13</span>
<span class="t" style="left:883.00px;top:600.20px;font-size:14px;line-height:14px;color:#333333;letter-spacing:-0.217px;">Разреше</span>
<span class="t" style="left:939.50px;top:604.94px;font-size:8.4px;line-height:8.4px;color:#333333;font-weight:bold;">…</span>
<span class="t" style="left:612.40px;top:624.05px;font-size:14px;line-height:14px;color:#333333;letter-spacing:-0.238px;">Прием офтальмолога</span>
<span class="t" style="left:849.00px;top:624.05px;font-size:14px;line-height:14px;color:#333333;">f15</span>
<span class="t" style="left:883.00px;top:624.05px;font-size:14px;line-height:14px;color:#333333;letter-spacing:-0.217px;">Разреше</span>
<span class="t" style="left:939.50px;top:628.79px;font-size:8.4px;line-height:8.4px;color:#333333;font-weight:bold;">…</span>
<span class="t" style="left:612.40px;top:647.90px;font-size:14px;line-height:14px;color:#333333;letter-spacing:-0.537px;">ЭКГ</span>
<span class="t" style="left:849.00px;top:647.90px;font-size:14px;line-height:14px;color:#333333;">f22</span>
<span class="t" style="left:883.00px;top:647.90px;font-size:14px;line-height:14px;color:#333333;letter-spacing:-0.217px;">Разреше</span>
<span class="t" style="left:939.50px;top:652.64px;font-size:8.4px;line-height:8.4px;color:#333333;font-weight:bold;">…</span>
<span class="t" style="left:612.40px;top:671.75px;font-size:14px;line-height:14px;color:#333333;letter-spacing:-0.245px;">Прием уролога</span>
<span class="t" style="left:849.00px;top:671.75px;font-size:14px;line-height:14px;color:#333333;">f30</span>
<span class="t" style="left:883.00px;top:671.75px;font-size:14px;line-height:14px;color:#333333;letter-spacing:-0.217px;">Разреше</span>
<span class="t" style="left:939.50px;top:676.49px;font-size:8.4px;line-height:8.4px;color:#333333;font-weight:bold;">…</span>
<svg style="left:0;top:0" width="1710" height="692"><polygon points="1443.2,466 1450.2,466 1446.7,461.6" fill="#c4c4c4"/><polygon points="1443.2,669.6 1450.2,669.6 1446.7,674.2" fill="#444"/></svg>
<div style="left:1442px;top:478.4px;width:9.6px;height:179px;background:#d5d5d5;border-radius:4.8px;"></div>
<div style="left:1442px;top:478.4px;width:9.6px;height:65.2px;background:#9b9b9b;border-radius:4.8px;"></div>
<div style="left:0px;top:690px;width:1710px;height:2px;background:#fff;"></div>
<div style="left:1708px;top:0px;width:2px;height:692px;background:#fff;"></div>
</div></body></html>
